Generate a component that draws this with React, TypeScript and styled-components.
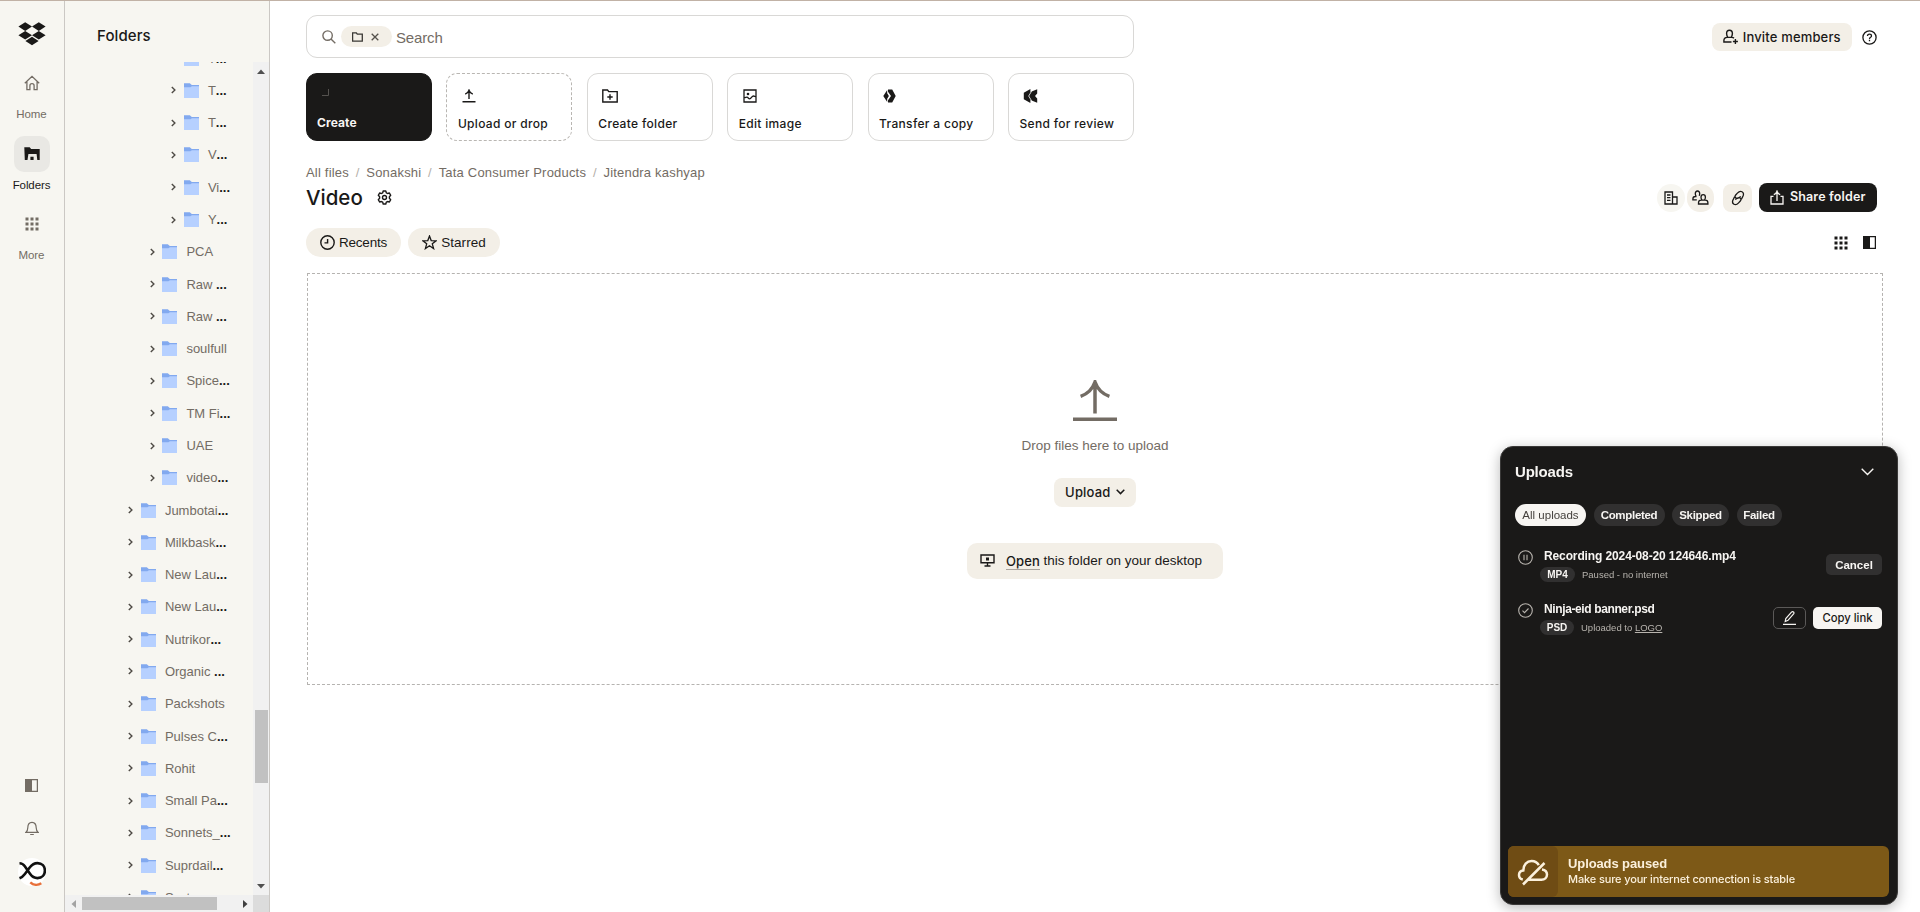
import React from "react";
import styled, { createGlobalStyle, css } from "styled-components";

const ink = "#1a1918";
const muted = "#736c64";
const sand = "#f3efe7";
const paper = "#f7f6f1";
const sans = `"Liberation Sans", Arial, sans-serif`;
const wide = `Inter, "Liberation Sans", sans-serif`;

const GlobalStyle = createGlobalStyle`
  * { box-sizing: border-box; }
  html, body { margin: 0; padding: 0; }
  body { background: #fff; color: ${ink}; font-family: ${sans}; overflow: hidden; }
  svg { display: block; flex: none; }
  button { font: inherit; color: inherit; border: 0; padding: 0; background: none; cursor: pointer; }
`;

const Shell = styled.div`
  display: flex;
  width: 1920px;
  height: 912px;
  border-top: 1px solid #c1b2a6;
  overflow: hidden;
`;

/* Navigation rail */
const Rail = styled.nav`
  width: 65px;
  height: 100%;
  flex: none;
  display: flex;
  flex-direction: column;
  align-items: center;
  background: ${paper};
  border-right: 1px solid #cbc8c4;
  padding: 21px 1px 26px 0;
  color: ${muted};
`;
const RailItem = styled.div<{ $active?: boolean }>`
  display: flex;
  flex-direction: column;
  align-items: center;
  height: 70.7px;
  font-size: 11.5px;
  line-height: 16px;
  letter-spacing: -0.1px;
  color: ${(p) => (p.$active ? ink : muted)};
`;
const RailTile = styled.span<{ $active?: boolean }>`
  display: flex;
  align-items: center;
  justify-content: center;
  width: 36px;
  height: 36px;
  margin-bottom: 5px;
  border-radius: 10px;
  background: ${(p) => (p.$active ? "#e9e8e4" : "transparent")};
`;
const RailTop = styled.div`
  margin-top: 19px;
  flex: 1;
`;
const RailFoot = styled.div`
  display: flex;
  flex-direction: column;
  align-items: center;
  gap: 29px;
`;
const Avatar = styled.div`
  margin-top: -7px;
  width: 28px;
  height: 28px;
  border-radius: 50%;
  background: #fff;
`;

/* Folder tree */
const Side = styled.aside`
  width: 205px;
  flex: none;
  height: 100%;
  display: flex;
  flex-direction: column;
  background: ${paper};
  border-right: 1px solid #cbc8c4;
`;
const SideTitle = styled.h2`
  margin: 0;
  height: 61px;
  padding: 25px 0 0 32px;
  font: 500 15px/20px ${wide};
  letter-spacing: 0.1px;
  flex: none;
`;
const TreeArea = styled.div`
  display: flex;
  height: 833px;
  flex: none;
`;
const Tree = styled.div`
  flex: 1;
  overflow: hidden;
`;
const TreeList = styled.div`
  margin-top: -20px;
`;
const TreeRow = styled.div<{ $level: number }>`
  display: flex;
  align-items: center;
  height: 32.29px;
  padding-left: ${(p) => 63.2 + p.$level * 21.5}px;
  font-size: 13px;
  color: ${muted};
  white-space: pre;
`;
const TreeFolder = styled.svg`
  margin: 0 9.2px 0 7.5px;
`;
const Dots = styled.span`
  color: ${ink};
  font-weight: 700;
`;
const VBar = styled.div`
  width: 16px;
  background: #f1f1f1;
  display: flex;
  flex-direction: column;
  align-items: center;
  padding: 7px 0 6px;
`;
const VThumb = styled.div`
  width: 13px;
  height: 73px;
  margin-top: 636px;
  margin-bottom: auto;
  background: #c1c1c1;
`;
const HBar = styled.div`
  flex: 1;
  display: flex;
  align-items: center;
  background: #f1f1f1;
  padding-left: 6px;
`;
const HThumb = styled.div`
  width: 135px;
  height: 13px;
  margin: 0 26px 0 6px;
  background: #c1c1c1;
`;
const Corner = styled.div`
  margin-left: auto;
  width: 16px;
  height: 100%;
  background: #dcdcdc;
`;

/* Main column */
const Main = styled.main`
  flex: 1;
  min-width: 0;
  padding: 14px 37px 0 36px;
`;
const TopBar = styled.div`
  display: flex;
  align-items: flex-start;
  height: 58px;
  padding-right: 6px;
`;
const SearchBox = styled.div`
  display: flex;
  align-items: center;
  width: 828px;
  height: 43px;
  padding: 0 15px;
  border: 1px solid #d9d8d6;
  border-radius: 11px;
  font-size: 15px;
  letter-spacing: -0.15px;
  line-height: 18px;
  color: ${muted};
`;
const ScopeChip = styled.span`
  display: flex;
  align-items: center;
  justify-content: space-between;
  width: 51px;
  height: 21px;
  margin: 0 4px 0 5px;
  padding: 0 13px 0 11px;
  border-radius: 11px;
  background: ${sand};
`;
const SearchText = styled.span`
  padding-top: 2px;
`;
const TopActions = styled.div`
  display: flex;
  align-items: center;
  gap: 10px;
  margin: 8px 0 0 auto;
`;
const Button = styled.button<{ $dark?: boolean; $w: number; $h?: number; $size?: number; $gap?: number }>`
  display: flex;
  align-items: center;
  justify-content: center;
  gap: ${(p) => p.$gap ?? 5.5}px;
  width: ${(p) => p.$w}px;
  height: ${(p) => p.$h ?? 29}px;
  padding-bottom: 1px;
  border-radius: 8px;
  font: ${(p) => (p.$dark ? 600 : 500)} ${(p) => p.$size ?? 13}px/20px ${wide};
  letter-spacing: 0.16px;
  white-space: nowrap;
  background: ${(p) => (p.$dark ? ink : sand)};
  color: ${(p) => (p.$dark ? "#f7f5f2" : ink)};
`;
const Cards = styled.div`
  display: flex;
  justify-content: space-between;
  width: 828px;
`;
const Card = styled.div<{ $kind?: "dark" | "dashed" }>`
  width: 126px;
  height: 68px;
  display: flex;
  flex-direction: column;
  justify-content: space-between;
  padding: 12px 10px 7px 10.5px;
  border: 1px solid #d9d8d6;
  border-radius: 11px;
  font: 500 12px/18px ${wide};
  letter-spacing: 0.32px;
  white-space: nowrap;
  ${(p) => p.$kind === "dashed" && css`border: 1px dashed #b9b6b2;`}
  ${(p) =>
    p.$kind === "dark" &&
    css`
      background: ${ink};
      border-color: ${ink};
      color: #f7f5f2;
      font-weight: 700;
      letter-spacing: 0.1px;
      padding-left: 10px;
      padding-bottom: 8px;
    `}
`;
const CardIcon = styled.span`
  padding-left: 4px;
  height: 20px;
  display: flex;
  align-items: center;
`;
const Crumbs = styled.div`
  display: flex;
  margin-top: 23px;
  font-size: 13px;
  line-height: 18px;
  letter-spacing: 0.2px;
  color: ${muted};
`;
const Slash = styled.span`
  width: 17.3px;
  text-align: center;
  color: #b4afa9;
`;
const TitleRow = styled.div`
  display: flex;
  align-items: center;
  height: 29px;
  margin-top: 1px;
  padding-right: 6px;
`;
const Title = styled.h1`
  margin: 0 14px 0 0;
  font: 500 20.5px/28px ${wide};
`;
const TitleActions = styled.div`
  display: flex;
  align-items: center;
  margin-left: auto;
`;
const Round = styled.span<{ $bg: string; $r: number; $w: number; $gap: number }>`
  display: flex;
  align-items: center;
  justify-content: center;
  width: ${(p) => p.$w}px;
  height: 28px;
  margin-right: ${(p) => p.$gap}px;
  border-radius: ${(p) => p.$r}px;
  background: ${(p) => p.$bg};
`;
const FilterRow = styled.div`
  display: flex;
  align-items: center;
  gap: 7px;
  height: 29px;
  margin-top: 16px;
  padding-right: 7px;
`;
const Filter = styled.span<{ $w: number; $ls: number }>`
  display: flex;
  align-items: center;
  justify-content: center;
  gap: 4px;
  width: ${(p) => p.$w}px;
  height: 29px;
  border-radius: 15px;
  background: ${sand};
  font-size: 13.5px;
  letter-spacing: ${(p) => p.$ls}px;
`;
const ViewIcons = styled.div`
  display: flex;
  gap: 15px;
  margin-left: auto;
`;
const DropZone = styled.section`
  display: flex;
  flex-direction: column;
  align-items: center;
  height: 412px;
  margin: 16px 0 0 1px;
  padding-top: 106px;
  border: 1px dashed #b5b3b0;
  font-size: 13.5px;
`;
const DropText = styled.p`
  margin: 15px 0 23px;
  line-height: 18px;
  color: ${muted};
`;
const OpenBox = styled.div`
  display: flex;
  align-items: center;
  width: 256px;
  height: 36px;
  margin-top: 36px;
  padding: 0 0 1px 13px;
  border-radius: 10px;
  background: ${sand};
  white-space: pre;
`;
const OpenLink = styled.a`
  margin: 1px 0 0 11px;
  font: 500 13px/16px ${wide};
  letter-spacing: 0.1px;
  border-bottom: 1px solid #a9a49d;
`;

/* Upload manager */
const Panel = styled.section`
  position: fixed;
  left: 1500px;
  top: 446px;
  width: 398px;
  height: 459px;
  display: flex;
  flex-direction: column;
  padding: 0 8px 7px;
  border-radius: 13px;
  background: ${ink};
  border: 1px solid #3a3938;
  box-shadow: 0 3px 14px rgba(0, 0, 0, 0.28);
  color: #f7f5f2;
`;
const PanelHead = styled.header`
  display: flex;
  align-items: center;
  justify-content: space-between;
  padding: 14px 15px 0 6px;
  font: 700 15px/22px ${sans};
  letter-spacing: -0.2px;
`;
const Chips = styled.div`
  display: flex;
  gap: 7.5px;
  padding: 21px 0 0 6px;
`;
const Chip = styled.span<{ $on?: boolean; $w: number }>`
  width: ${(p) => p.$w}px;
  height: 22px;
  border-radius: 11px;
  text-align: center;
  font: ${(p) => (p.$on ? 400 : 700)} 11.5px/22px ${sans};
  letter-spacing: ${(p) => (p.$on ? 0 : -0.3)}px;
  white-space: nowrap;
  background: ${(p) => (p.$on ? "#f7f5f2" : "#313030")};
  color: ${(p) => (p.$on ? "#45413d" : "#f7f5f2")};
`;
const UploadRow = styled.div<{ $top: number }>`
  display: flex;
  align-items: flex-start;
  height: 35px;
  margin-top: ${(p) => p.$top}px;
  padding: 0 7px 0 9px;
`;
const UploadInfo = styled.div`
  flex: 1;
  margin-left: 7px;
`;
const FileName = styled.div<{ $ls: number }>`
  margin: -1px 0 0 4px;
  font: 700 12px/14px ${sans};
  letter-spacing: ${(p) => p.$ls}px;
  white-space: nowrap;
`;
const Meta = styled.div`
  display: flex;
  align-items: center;
  margin-top: 4px;
  font-size: 9.5px;
  color: #b8b4ae;
  white-space: pre;
`;
const Ext = styled.span<{ $w: number }>`
  width: ${(p) => p.$w}px;
  height: 15px;
  margin-right: 7px;
  border-radius: 8px;
  background: #313030;
  color: #f7f5f2;
  text-align: center;
  font: 700 10px/15px ${sans};
`;
const RowActions = styled.div`
  display: flex;
  gap: 7px;
  padding-top: 4px;
`;
const Small = styled.button<{ $w: number; $kind: "grey" | "line" | "light" }>`
  display: flex;
  align-items: center;
  justify-content: center;
  width: ${(p) => p.$w}px;
  height: ${(p) => (p.$kind === "grey" ? 21 : 22)}px;
  border-radius: 5px;
  font: 700 11.5px/20px ${sans};
  white-space: nowrap;
  ${(p) => p.$kind === "grey" && css`background: #313030;`}
  ${(p) => p.$kind === "line" && css`border: 1px solid #5b5958;`}
  ${(p) => p.$kind === "light" && css`background: #f7f5f2; color: ${ink}; font: 500 11.3px/20px ${wide};`}
`;
const Banner = styled.div`
  display: flex;
  height: 51px;
  margin: auto 0 0 -1px;
  border-radius: 6px;
  background: #7d5917;
  color: #fbf0dc;
  overflow: hidden;
`;
const BannerIcon = styled.div`
  width: 50px;
  display: flex;
  align-items: center;
  justify-content: center;
  border-radius: 0 6px 6px 0;
  background: #6f4c14;
`;
const BannerText = styled.div`
  padding: 10px 0 0 10px;
  font: 500 11px/14px ${wide};
  letter-spacing: -0.14px;
  white-space: nowrap;
`;
const BannerTitle = styled.div`
  font: 700 13px/16px ${sans};
  letter-spacing: -0.1px;
`;

type IconProps = { w: number; h: number; c?: string; sw?: number; children: React.ReactNode };
const Icon = ({ w, h, c = "currentColor", sw = 1.3, children }: IconProps) => (
  <svg width={w} height={h} viewBox={`0 0 ${w} ${h}`} fill="none" stroke={c} strokeWidth={sw}>
    {children}
  </svg>
);

const GridDots = () => (
  <Icon w={14} h={14}>
    <g fill="currentColor" stroke="none">
      {[0.5, 5.5, 10.5].map((y) => [0.5, 5.5, 10.5].map((x) => <rect key={`${x}-${y}`} x={x} y={y} width="3" height="3" />))}
    </g>
  </Icon>
);
const SplitView = () => (
  <Icon w={13} h={13}>
    <rect x=".6" y=".6" width="11.8" height="11.8" />
    <rect x="0" y="0" width="7" height="13" fill="currentColor" stroke="none" />
  </Icon>
);
const Chevron = () => (
  <Icon w={5} h={8} c="#4f4b46" sw={1.4}>
    <path d="M.8.9 3.9 4 .8 7.1" />
  </Icon>
);
const FolderGlyph = () => (
  <TreeFolder width="15" height="15" viewBox="0 0 15 15">
    <path d="M0 .3h5.8l2 1.7H15v4H0z" fill="#82a9ef" />
    <path d="M0 4.2h6.4l1.5-1H15V15H0z" fill="#b6d0ff" />
  </TreeFolder>
);

const tree: [string, number, boolean][] = [
  ["T", 2, true], ["T", 2, true], ["T", 2, true], ["V", 2, true], ["Vi", 2, true], ["Y", 2, true],
  ["PCA", 1, false], ["Raw ", 1, true], ["Raw ", 1, true], ["soulfull", 1, false], ["Spice", 1, true],
  ["TM Fi", 1, true], ["UAE", 1, false], ["video", 1, true],
  ["Jumbotai", 0, true], ["Milkbask", 0, true], ["New Lau", 0, true], ["New Lau", 0, true],
  ["Nutrikor", 0, true], ["Organic ", 0, true], ["Packshots", 0, false], ["Pulses C", 0, true],
  ["Rohit", 0, false], ["Small Pa", 0, true], ["Sonnets_", 0, true], ["Suprdail", 0, true], ["System", 0, false],
];

export default function App() {
  return (
    <>
      <GlobalStyle />
      <Shell>
        <Rail>
          <svg width="28" height="24" viewBox="0 0 28 24" fill={ink}>
            <path d="M7.2.3 14 4.6 7.2 8.9.4 4.6zM20.8.3l6.8 4.3-6.8 4.3L14 4.6zM7.2 8.9l6.8 4.3-6.8 4.3-6.8-4.3zM20.8 8.9l6.8 4.3-6.8 4.3-6.8-4.3zM14 14.8l6.6 4.2-6.6 4.3L7.4 19z" />
          </svg>
          <RailTop>
            <RailItem>
              <RailTile>
                <Icon w={16} h={16} sw={1.3}>
                  <path d="M.8 8.2 8 1.4l7.2 6.8M2.9 6.4v8.3h3v-3.900a2.100 2.100 0 0 1 4.200 0v3.900h3V6.400" />
                </Icon>
              </RailTile>
              Home
            </RailItem>
            <RailItem $active>
              <RailTile $active>
                <Icon w={16} h={14}>
                  <path d="M.3.3h5.400l1.400 1.600h8.600v11.200h-2.400L12.600 7H4.400l-.9 6.100H.8zM6.400 9.800h3.200v3.300H6.400z" fill="currentColor" stroke="none" />
                </Icon>
              </RailTile>
              Folders
            </RailItem>
            <RailItem>
              <RailTile><GridDots /></RailTile>
              More
            </RailItem>
          </RailTop>
          <RailFoot>
            <SplitView />
            <Icon w={14} h={15} sw={1.2}>
              <path d="M.8 11.400c1.600-1.200 2-2.600 2-4.600 0-3.300 1.700-5.400 4.200-5.400s4.200 2.100 4.200 5.400c0 2 .4 3.400 2 4.600zM5.200 13.500h3.600" />
            </Icon>
            <Avatar>
              <svg width="28" height="28" viewBox="0 0 28 28" fill="none">
                <path d="M1.500 5.200c2.700 0 3.900 1 5.300 3l5.200 7.600c1.900 2.700 4 4.300 7.500 4.300 4.500 0 7.400-3.200 7.400-7.500s-2.900-7.500-7.400-7.500c-3.600 0-5.800 1.700-8 4.600l-4.600 6.300c-1.500 2-2.900 3.300-5.400 4.300" stroke="#111" strokeWidth="2.600" />
                <path d="M12.300 24.300c3 2.800 7.500 3.300 11 1" stroke="#e8703a" strokeWidth="2.400" />
              </svg>
            </Avatar>
          </RailFoot>
        </Rail>

        <Side>
          <SideTitle>Folders</SideTitle>
          <TreeArea>
            <Tree>
              <TreeList>
                {tree.map(([name, level, cut], i) => (
                  <TreeRow key={i} $level={level}>
                    <Chevron />
                    <FolderGlyph />
                    {name}
                    {cut && <Dots>...</Dots>}
                  </TreeRow>
                ))}
              </TreeList>
            </Tree>
            <VBar>
              <svg width="8" height="5"><path d="M0 5h8L4 .5z" fill="#505050" /></svg>
              <VThumb />
              <svg width="8" height="5"><path d="M0 0h8L4 4.500z" fill="#505050" /></svg>
            </VBar>
          </TreeArea>
          <HBar>
            <svg width="5" height="8"><path d="M5 0v8L.5 4z" fill="#a3a3a3" /></svg>
            <HThumb />
            <svg width="5" height="8"><path d="M0 0v8l4.500-4z" fill="#404040" /></svg>
            <Corner />
          </HBar>
        </Side>

        <Main>
          <TopBar>
            <SearchBox>
              <Icon w={14} h={14} sw={1.4}>
                <circle cx="5.600" cy="5.600" r="4.700" />
                <path d="m9 9 4.300 4.300" />
              </Icon>
              <ScopeChip>
                <Icon w={11} h={10} c="#3a3835">
                  <path d="M.6.8h3.700l1 1.400h5v7H.6z" />
                </Icon>
                <Icon w={8} h={8} c="#55514c">
                  <path d="m.7.7 6.600 6.600m0-6.600L.7 7.300" />
                </Icon>
              </ScopeChip>
              <SearchText>Search</SearchText>
            </SearchBox>
            <TopActions>
              <Button $w={140} $h={28} $gap={4.5}>
                <Icon w={15} h={15} sw={1.400}>
                  <path d="M8.500 13H.9v-1.400c0-1.900 1.400-3.200 3.300-3.200h4.600c.9 0 1.600.2 2.200.7M6.500 1.200c-1.700 0-2.900 1.200-2.900 3.400 0 1.700.6 2.800 1.200 3.800h3.400c.6-1 1.200-2.100 1.200-3.800 0-2.200-1.200-3.400-2.900-3.400zM12.400 10v5M9.900 12.500h5" />
                </Icon>
                Invite members
              </Button>
              <Icon w={15} h={15} c={ink}>
                <circle cx="7.500" cy="7.500" r="6.600" />
                <path d="M5.500 6.100c0-1.300.9-2 2-2s2 .7 2 1.800c0 1.500-2 1.300-2 3M7.500 9.800v1.400" />
              </Icon>
            </TopActions>
          </TopBar>

          <Cards>
            <Card $kind="dark">
              <CardIcon>
                <svg width="10" height="20" fill="none" stroke="#55524f"><path d="M1 9.500h6.500V3" /></svg>
              </CardIcon>
              Create
            </Card>
            <Card $kind="dashed">
              <CardIcon>
                <Icon w={14} h={14} sw={1.4}>
                  <path d="M.5 12.700h13M7 10V1.300M3.200 5.200C5.200 4.500 6.400 3.200 7 1.300c.6 1.900 1.800 3.200 3.800 3.900" />
                </Icon>
              </CardIcon>
              Upload or drop
            </Card>
            <Card>
              <CardIcon>
                <Icon w={16} h={14} sw={1.4}>
                  <path d="M.8 1h4.700l1.300 1.600h8.400V13H.8zM8 5.300v5.400M5.300 8h5.400" />
                </Icon>
              </CardIcon>
              Create folder
            </Card>
            <Card>
              <CardIcon>
                <Icon w={14} h={14}>
                  <path d="M1 1h12v12H1zM1 8.800c1.700 0 1.900-.6 3-.6 1.200 0 1.300 1.600 2.700 1.600C8.400 9.800 8.600 7 10.500 7c1 0 1.500.6 2.500.6" />
                  <circle cx="5" cy="5" r="1.300" fill="currentColor" stroke="none" />
                </Icon>
              </CardIcon>
              Edit image
            </Card>
            <Card>
              <CardIcon>
                <Icon w={13} h={14}>
                  <path d="M4.200 1 .3 7l3.900 6V9.800L5.900 7 4.200 4.200zM5 .5h4.200L12.700 7l-3.500 6.500H5v-2.300L8 7 5 2.800z" fill="currentColor" stroke="none" />
                </Icon>
              </CardIcon>
              Transfer a copy
            </Card>
            <Card>
              <CardIcon>
                <Icon w={15} h={14}>
                  <path d="M7.400 0v3L14.200.3v4.200L12 7l2.200 2.500v4.200L7.400 11v3L.8 10.200V3.800z" fill="currentColor" stroke="none" />
                  <path d="M8.600 2.200 5.700 7l2.900 4.800" stroke="#fff" strokeWidth=".8" />
                </Icon>
              </CardIcon>
              Send for review
            </Card>
          </Cards>

          <Crumbs>
            All files<Slash>/</Slash>Sonakshi<Slash>/</Slash>Tata Consumer Products<Slash>/</Slash>Jitendra kashyap
          </Crumbs>
          <TitleRow>
            <Title>Video</Title>
            <Icon w={15} h={15} sw={1.4}>
              <path d="M6.200 1h2.600l.5 1.800 1.300.7 1.800-.5 1.300 2.300L12.400 6.700v1.600l1.300 1.400-1.300 2.300-1.800-.5-1.300.7-.5 1.800H6.200l-.5-1.800-1.300-.7-1.800.5L1.300 9.700l1.300-1.400V6.700L1.300 5.300 2.600 3l1.800.5 1.300-.7z" strokeLinejoin="round" />
              <circle cx="7.500" cy="7.500" r="2" />
            </Icon>
            <TitleActions>
              <Round $bg={paper} $r={14} $w={28} $gap={2}>
                <Icon w={14} h={14}>
                  <path d="M1 1h7.500v12H1zM8.500 6H13v7H8.500M3 4h3.500M3 6.700h3.500M3 9.400h3.500" />
                </Icon>
              </Round>
              <Round $bg={sand} $r={13} $w={27} $gap={9}>
                <Icon w={17} h={15}>
                  <path d="M4.800 9.900H.9V9c0-1.500.9-2.500 2.400-2.500h1.200M7.200 5.800c.3-.6.500-1.200.5-2C7.700 2 6.800 1 5.500 1S3.300 2 3.300 3.800c0 1.100.4 2 .9 2.700M11.200 4.700c-1.400 0-2.200 1-2.200 2.600 0 1.300.4 2 .9 2.800h2.600c.5-.8.9-1.500.9-2.800 0-1.600-.8-2.600-2.200-2.600zM6.500 14v-1.200c0-1.600 1-2.700 2.600-2.700h4.200c1.600 0 2.600 1.100 2.600 2.700V14z" />
                </Icon>
              </Round>
              <Round $bg={sand} $r={8} $w={29} $gap={7}>
                <Icon w={14} h={16} sw={1.300}>
                  <path d="M10.400 9.200l1.200-2.300c1-1.800 1.200-4.200-.6-5.200-1.700-.9-3.400.1-4.600 1.400L4.700 5c-1 1.100-.8 2.400.3 3 .9.500 2 .2 3-.4l1.800-1.100M3.600 6.800 2.400 9.100c-1 1.800-1.200 4.200.6 5.200 1.700.9 3.400-.1 4.600-1.400L9.300 11c1-1.100.8-2.400-.3-3-.9-.5-2-.2-3 .4L4.200 9.500" />
                </Icon>
              </Round>
              <Button $dark $w={118} $size={12.5}>
                <Icon w={14} h={15}>
                  <path d="M3.500 6.300H1V14h12V6.300h-2.500M7 11V1.200M3.800 4.700C5.500 4 6.500 2.800 7 1.200c.5 1.600 1.500 2.800 3.200 3.500" />
                </Icon>
                Share folder
              </Button>
            </TitleActions>
          </TitleRow>
          <FilterRow>
            <Filter $w={95} $ls={-0.2}>
              <Icon w={15} h={15} sw={1.4}>
                <circle cx="7.500" cy="7.500" r="6.700" />
                <path d="M7.600 4v3.900H4.500" />
              </Icon>
              Recents
            </Filter>
            <Filter $w={92} $ls={0.05}>
              <Icon w={15} h={15}>
                <path d="m7.500 1 1.700 4.600 4.900.2-3.800 3 1.300 4.800-4.100-2.800-4.100 2.800 1.300-4.800-3.800-3 4.900-.2z" />
              </Icon>
              Starred
            </Filter>
            <ViewIcons>
              <GridDots />
              <SplitView />
            </ViewIcons>
          </FilterRow>

          <DropZone>
            <svg width="44" height="42" viewBox="0 0 44 42" fill="none" stroke={muted} strokeWidth="3.500">
              <path d="M0 39.300h44M22 33.500V2M7.600 16.300C14.500 14 19.500 9 22 2c2.500 7 7.500 12 14.400 14.300" />
            </svg>
            <DropText>Drop files here to upload</DropText>
            <Button $w={82}>
              Upload
              <Icon w={9} h={6} sw={1.500}>
                <path d="m.7.8 3.800 3.800L8.300.8" />
              </Icon>
            </Button>
            <OpenBox>
              <Icon w={15} h={13} sw={1.400}>
                <path d="M1 1h13v7.800H1zM7.500 9v3M4.500 12h6" />
                <rect x="6" y="3.500" width="3" height="3" fill="currentColor" stroke="none" />
              </Icon>
              <OpenLink>Open</OpenLink> this folder on your desktop
            </OpenBox>
          </DropZone>
        </Main>
      </Shell>

      <Panel>
        <PanelHead>
          Uploads
          <Icon w={13} h={8} sw={1.400}>
            <path d="m.7.8 5.800 5.800L12.300.8" />
          </Icon>
        </PanelHead>
        <Chips>
          <Chip $on $w={71}>All uploads</Chip>
          <Chip $w={71}>Completed</Chip>
          <Chip $w={57}>Skipped</Chip>
          <Chip $w={45}>Failed</Chip>
        </Chips>
        <UploadRow $top={24}>
          <Icon w={15} h={15} c="#b8b4ae" sw={1.100}>
            <circle cx="7.500" cy="7.500" r="6.800" />
            <path d="M6 4.800v5.400M9 4.800v5.400" />
          </Icon>
          <UploadInfo>
            <FileName $ls={-0.12}>Recording 2024-08-20 124646.mp4</FileName>
            <Meta><Ext $w={35}>MP4</Ext>Paused - no internet</Meta>
          </UploadInfo>
          <RowActions><Small $kind="grey" $w={56}>Cancel</Small></RowActions>
        </UploadRow>
        <UploadRow $top={18}>
          <Icon w={15} h={15} c="#b8b4ae" sw={1.100}>
            <circle cx="7.500" cy="7.500" r="6.800" />
            <path d="m4.500 7.700 2 2 4-4.200" />
          </Icon>
          <UploadInfo>
            <FileName $ls={-0.38}>Ninja-eid banner.psd</FileName>
            <Meta><Ext $w={34}>PSD</Ext>Uploaded to <u>LOGO</u></Meta>
          </UploadInfo>
          <RowActions>
            <Small $kind="line" $w={33}>
              <Icon w={13} h={14} sw={1.200}>
                <path d="M0 13.300h13M2.200 10.500l.6-3L8.500 1.200c.6-.6 1.400-.7 2-.2s.6 1.300.1 1.900L5 9.300z" />
              </Icon>
            </Small>
            <Small $kind="light" $w={69}>Copy link</Small>
          </RowActions>
        </UploadRow>
        <Banner>
          <BannerIcon>
            <svg width="32" height="28" viewBox="0 0 32 28" fill="none" stroke="#fbf0dc" strokeWidth="2.500">
              <path d="M5.800 21.500C3.500 21 2 19.200 2 16.900c0-2.500 1.700-4.300 4.300-4.500C6.300 6.700 9.900 3 14.600 3c3.300 0 5.800 1.500 7.200 4.200M25 11.400c2.900.4 5 2.400 5 5.200 0 3.200-2.300 5.200-5.600 5.200H10.500M6 26.500 27.500 5" />
            </svg>
          </BannerIcon>
          <BannerText>
            <BannerTitle>Uploads paused</BannerTitle>
            Make sure your internet connection is stable
          </BannerText>
        </Banner>
      </Panel>
    </>
  );
}
